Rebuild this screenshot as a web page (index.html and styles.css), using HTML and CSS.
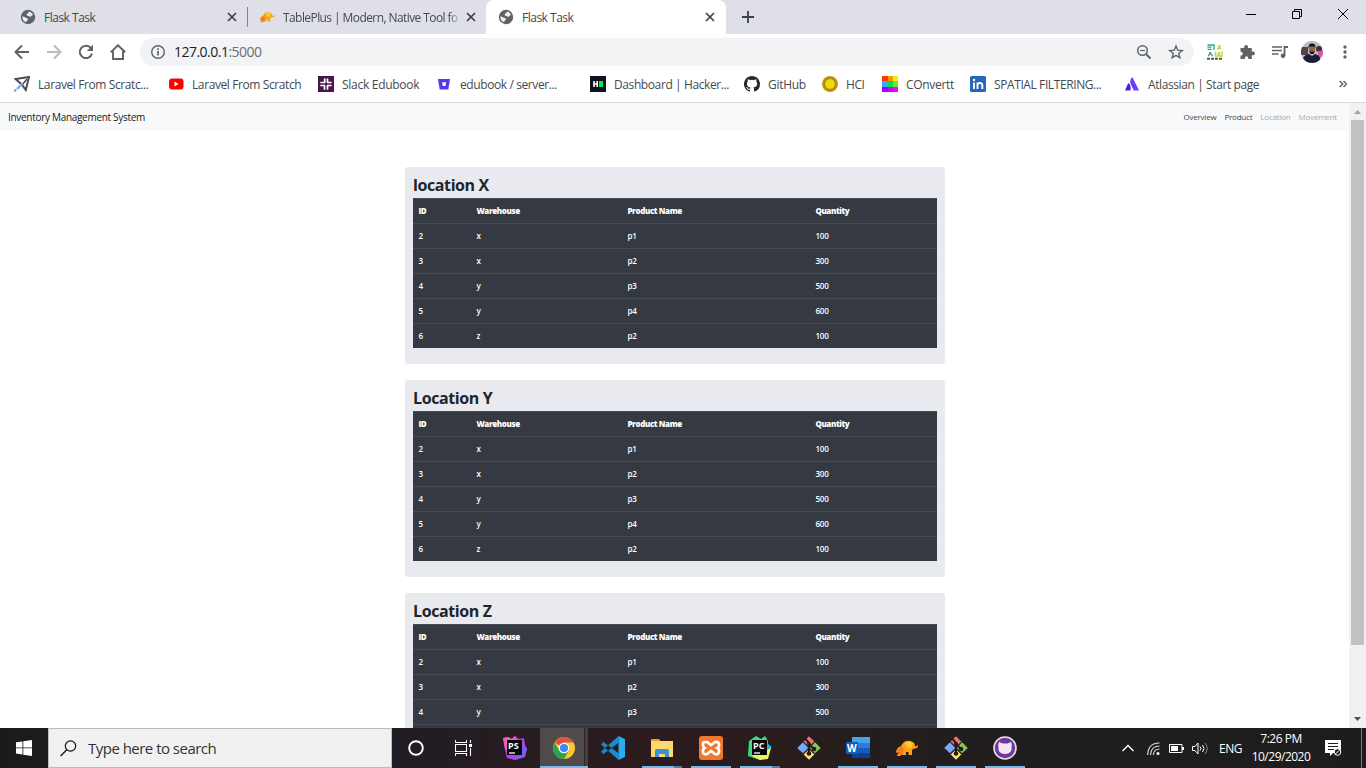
FILE: index.html
```html
<!DOCTYPE html>
<html lang="en">
<head>
<meta charset="utf-8">
<title>Flask Task</title>
<link rel="stylesheet" href="styles.css">
</head>
<body>
<svg class="defs" width="0" height="0">
  <defs>
    <symbol id="globe" viewBox="0 0 16 16"><circle cx="8" cy="8" r="7.200" fill="#5f6368"/><path d="M8.500 2.500Q12 3 13 6q-1.500 0-2 1.500-1.500.5-2.500-.5-1.500 0-2-1.500Q7 4 8.500 4zM2.300 7.500q2 0 3.200 1.200 2.300-.2 2.500 1.500.1 1.200-1.200 1.300-.2 1.500-1.500 1.500-2.800-1.500-3-5.500z" fill="#f0f0f3"/></symbol>
    <symbol id="close" viewBox="0 0 10 10"><path d="M1 1l8 8M9 1L1 9" stroke="#3c4043" stroke-width="1.700"/></symbol>
    <symbol id="elephant" viewBox="0 0 24 18"><path d="M1 14Q1 9 6 7Q9 1 15 2Q20 3 20 7Q22 8 23 5.500Q23.500 10 19 9.500L17 11V16H13.500V13H11V16H7.500L6.500 14L5.500 17H2L3.500 13Z" fill="#faa21b"/><path d="M2 12Q5 8 7 7L9 11L7 16H2.500L4 13Z" fill="#f37a20"/><path d="M10 4Q14 1 18 4L16 9L12 8Z" fill="#ffca28"/></symbol>
    <symbol id="git" viewBox="0 0 24 24"><g stroke="#222" stroke-width=".5"><path d="M12 0l5.500 5.500L12 11 6.500 5.500z" fill="#f07070"/><path d="M6 6l5.500 6L6 17.500 0 12z" fill="#78a8f8"/><path d="M18 6l6 6-6 5.500L12.500 12z" fill="#80cc50"/><path d="M12 13l5.500 5.500L12 24l-5.500-5.500z" fill="#ffe070"/></g><path d="M8.500 3L12 7v11M12 8l5 5" fill="none" stroke="#241c1c" stroke-width="2"/><circle cx="12" cy="8" r="2" fill="#241c1c"/><circle cx="12" cy="17.500" r="2.300" fill="#241c1c"/><circle cx="17" cy="13" r="2.300" fill="#241c1c"/></symbol>
  </defs>
</svg>
<div class="screen">
  <header class="tabstrip">
    <div class="tab tab-a"><svg width="16" height="16"><use href="#globe"/></svg><span class="tab-title">Flask Task</span><svg class="x" width="10" height="10"><use href="#close"/></svg></div>
    <div class="tab tab-b"><svg width="16" height="14"><use href="#elephant"/></svg><span class="tab-title fade">TablePlus | Modern, Native Tool fo</span><svg class="x" width="10" height="10"><use href="#close"/></svg></div>
    <div class="tab tab-active"><svg width="16" height="16"><use href="#globe"/></svg><span class="tab-title">Flask Task</span><svg class="x" width="10" height="10"><use href="#close"/></svg></div>
    <svg class="newtab" width="12" height="12" viewBox="0 0 12 12"><path d="M6 0v12M0 6h12" stroke="#3c4043" stroke-width="1.800"/></svg>
    <div class="winctl">
      <svg width="10" height="12" viewBox="0 0 10 12"><path d="M0 6.500h10" stroke="#000"/></svg>
      <svg width="10" height="12" viewBox="0 0 10 12"><path d="M.5 3.500h7v7h-7zM2.500 3.500v-2h7v7h-2" fill="none" stroke="#000"/></svg>
      <svg width="10" height="12" viewBox="0 0 10 12"><path d="M0 1l10 10M10 1L0 11" stroke="#000"/></svg>
    </div>
  </header>

  <div class="toolbar">
    <svg class="tb" viewBox="0 0 16 16"><path d="M15 8H2M8 1.500L1.500 8 8 14.500" fill="none" stroke="#5f6368" stroke-width="2"/></svg>
    <svg class="tb" viewBox="0 0 16 16"><path d="M1 8h13M8 1.500L14.500 8 8 14.500" fill="none" stroke="#babcbe" stroke-width="2"/></svg>
    <svg class="tb" viewBox="0 0 16 16"><path d="M13 4.200A6.200 6.200 0 1 0 14 9.500" fill="none" stroke="#5f6368" stroke-width="2"/><path d="M15 .8V7H8.800z" fill="#5f6368"/></svg>
    <svg class="tb" viewBox="0 0 16 16"><path d="M3 7v8h10V7M.8 8.300L8 1.200l7.200 7.100" fill="none" stroke="#5f6368" stroke-width="1.900"/></svg>
    <div class="omnibox">
      <svg width="16" height="16" viewBox="0 0 16 16"><circle cx="8" cy="8" r="6.300" fill="none" stroke="#5f6368" stroke-width="1.400"/><path d="M8 7v4.500M8 4.300v1.600" stroke="#5f6368" stroke-width="1.700"/></svg>
      <span class="url">127.0.0.1<span class="port">:5000</span></span>
      <svg class="lens" width="16" height="16" viewBox="0 0 16 16"><circle cx="6.500" cy="6.500" r="4.800" fill="none" stroke="#5f6368" stroke-width="1.500"/><path d="M10 10l4.500 4.500" stroke="#5f6368" stroke-width="2"/><path d="M4 6.500h5" stroke="#5f6368" stroke-width="1.200"/></svg>
      <svg width="16" height="16" viewBox="0 0 16 16"><path d="M8 2l1.700 4.200 4.500.3-3.500 2.900 1.200 4.400L8 11.400l-3.900 2.400 1.200-4.400-3.500-2.900 4.500-.3z" fill="none" stroke="#5f6368" stroke-width="1.400"/></svg>
    </div>
    <div class="exts">
      <svg width="16" height="16" viewBox="0 0 16 16"><path d="M.5 1h6.500v5M.5 3.200h4M.5 5.400h4M1 12q2-1 2-4 1 3 3 4" fill="none" stroke="#1fa890" stroke-width="1.300"/><path d="M10 5q3 0 3-4M11 1.500l3 3.500M8.500 7.500V12H11V8.500M12.500 8v4H15V7.500" fill="none" stroke="#bfd93a" stroke-width="1.400"/><path d="M0 14.700h16" stroke="#6b5140" stroke-width="2" stroke-dasharray="3 1"/></svg>
      <svg width="16" height="16" viewBox="0 0 16 16"><path d="M1.500 4h3.700V3a1.900 1.900 0 0 1 3.800 0v1h3.800v3.600H14a1.800 1.800 0 0 1 0 3.700h-1.200V15H9.300v-1a1.700 1.700 0 0 0-3.400 0v1H1.500v-3.500h.8a1.900 1.900 0 0 0 0-3.700h-.8z" fill="#5f6368"/></svg>
      <svg width="16" height="16" viewBox="0 0 16 16"><path d="M0 3h10M0 6.500h10M0 10h6.500" stroke="#5f6368" stroke-width="1.500"/><path d="M12.500 12V3h3.500" fill="none" stroke="#5f6368" stroke-width="1.800"/><circle cx="11" cy="11.800" r="2.300" fill="#5f6368"/></svg>
      <svg width="22" height="22" viewBox="0 0 22 22"><clipPath id="av"><circle cx="11" cy="11" r="11"/></clipPath><g clip-path="url(#av)"><path fill="#b9bcc9" d="M0 0h22v22H0z"/><path d="M0 6h7v8H0z" fill="#574249"/><circle cx="18" cy="8" r="3" fill="#432d30"/><path d="M17 10h5v6h-5z" fill="#e6509f"/><path d="M1 22q0-8 7-9l3 2 3-2q6 1 6 9z" fill="#1b2036"/><ellipse cx="11" cy="8.500" rx="3.200" ry="4.500" fill="#93644e"/><path d="M7.500 7.500q-.5-5 3.500-5t3.500 5l-1-2h-5zM8.500 10.500h5l-1 2.500h-3z" fill="#171417"/></g></svg>
      <svg width="4" height="14" viewBox="0 0 4 14"><g fill="#5f6368"><circle cx="2" cy="2" r="1.700"/><circle cx="2" cy="7" r="1.700"/><circle cx="2" cy="12" r="1.700"/></g></svg>
    </div>
  </div>

  <nav class="bookmarks">
    <a><svg viewBox="0 0 16 16"><path d="M1.500 3L15 1l-3.200 13-4-5.500z" fill="none" stroke="#494d50" stroke-width="2"/><path d="M13 3L8 9" stroke="#494d50" stroke-width="1.500"/><path d="M8.500 7.500L3 13M0 15.500l2-2" stroke="#76a7f5" stroke-width="2.300"/></svg><span>Laravel From Scratc...</span></a>
    <a><svg viewBox="0 0 16 16"><rect x="1" y="2.500" width="14.500" height="11" rx="3" fill="#f00"/><path d="M6.500 5.600v4.800L10.500 8z" fill="#fff"/></svg><span>Laravel From Scratch</span></a>
    <a><svg viewBox="0 0 16 16"><path fill="#4a154b" d="M0 0h16v16H0z"/><path d="M6.700 3v3.500M3 6.500h3M9.500 3v3M9.700 6.500H13M3 9.500h3.500M6.500 10v3M9.500 9.500V13M10 9.500h3" fill="none" stroke="#fff" stroke-width="1.700" stroke-linecap="round"/></svg><span>Slack Edubook</span></a>
    <a><svg viewBox="0 0 16 16"><path d="M2 3h12l-1.700 10.500H3.700z" fill="#5735ef"/><path d="M6.200 6.200h3.900l-.6 3.700H6.700z" fill="#fff"/></svg><span>edubook / server...</span></a>
    <a><svg viewBox="0 0 16 16"><path fill="#0e141e" d="M0 0h16v16H0z"/><path d="M4 5v6M7.200 5v6M4 8h3" stroke="#fff" stroke-width="1.600"/><path fill="#00ee5a" d="M9 5h4v6H9z"/></svg><span>Dashboard | Hacker...</span></a>
    <a><svg viewBox="0 0 16 16"><path fill="#24292e" d="M8 0C3.580 0 0 3.580 0 8c0 3.540 2.290 6.530 5.470 7.590.4.070.55-.17.55-.38v-1.490c-2.010.37-2.530-.49-2.690-.94-.09-.23-.48-.94-.82-1.130-.28-.15-.68-.52-.01-.53.630-.01 1.080.58 1.230.82.720 1.210 1.870.87 2.330.66.070-.52.280-.87.510-1.070-1.780-.2-3.640-.89-3.640-3.950 0-.87.310-1.590.82-2.150-.08-.2-.36-1.020.08-2.120 0 0 .67-.21 2.200.82a7.400 7.400 0 0 1 4 0c1.530-1.040 2.200-.82 2.200-.82.440 1.100.160 1.920.080 2.120.510.560.820 1.270.820 2.150 0 3.070-1.870 3.750-3.650 3.950.290.250.540.730.540 1.480v2.200c0 .210.150.460.550.380A8 8 0 0 0 16 8c0-4.420-3.580-8-8-8z"/></svg><span>GitHub</span></a>
    <a><svg viewBox="0 0 16 16"><circle cx="8" cy="8" r="8" fill="#c59a12"/><circle cx="8" cy="8" r="5.800" fill="none" stroke="#9f7c20" stroke-width="1.300" stroke-dasharray="1.500 .7"/><circle cx="8" cy="8" r="4.800" fill="#f0d810"/></svg><span>HCI</span></a>
    <a><svg viewBox="0 0 16 16"><path fill="#ff3800" d="M0 0h6v5H0z"/><path fill="#ff9800" d="M6 0h5v5H6z"/><path fill="#f7ed0a" d="M11 0h5v5h-5z"/><path fill="#37a9f5" d="M0 5h6v6H0z"/><path fill="#00df45" d="M6 5h5v6H6z"/><path fill="#62ed22" d="M11 5h5v6h-5z"/><path fill="#9b00ff" d="M0 11h6v5H0z"/><path fill="#d000ff" d="M6 11h5v5H6z"/><path fill="#f600ff" d="M11 11h5v5h-5z"/></svg><span>COnvertt</span></a>
    <a><svg viewBox="0 0 16 16"><rect width="16" height="16" rx="1.500" fill="#2866bc"/><path d="M4 6.500V13M7.500 13V6.500M7.500 9q.2-2 2.400-2T12.300 9v4" fill="none" stroke="#fff" stroke-width="1.900"/><circle cx="4" cy="4" r="1.200" fill="#fff"/></svg><span>SPATIAL FILTERING...</span></a>
    <a><svg viewBox="0 0 16 16"><path d="M5 7.500q-.5-.7-1 .1L1 14.400h5.300Q7.500 10.500 5 7.500z" fill="#4b1ee0"/><path d="M7.700 1.600Q5 5.500 7.300 9.500l2.500 4.900H15L8.700 1.700q-.5-.7-1-.1z" fill="#6a3dff"/></svg><span>Atlassian | Start page</span></a>
    <svg class="more" width="8" height="8" viewBox="0 0 8 8"><path d="M.7 1l3 3-3 3M4.500 1l3 3-3 3" fill="none" stroke="#5f6368" stroke-width="1.500"/></svg>
  </nav>

  <div class="viewport">
    <main class="page">
      <nav class="navbar">
        <span class="brand">Inventory Management System</span>
        <ul class="links"><li>Overview</li><li>Product</li><li class="muted">Location</li><li class="muted">Movement</li></ul>
      </nav>
      <div class="cards">
        <section class="card"><h2>location X</h2>
          <table><thead><tr><th class="c1">ID</th><th class="c2">Warehouse</th><th class="c3">Product Name</th><th>Quantity</th></tr></thead>
          <tbody><tr><td>2</td><td>x</td><td>p1</td><td>100</td></tr><tr><td>3</td><td>x</td><td>p2</td><td>300</td></tr><tr><td>4</td><td>y</td><td>p3</td><td>500</td></tr><tr><td>5</td><td>y</td><td>p4</td><td>600</td></tr><tr><td>6</td><td>z</td><td>p2</td><td>100</td></tr></tbody></table>
        </section>
        <section class="card"><h2>Location Y</h2>
          <table><thead><tr><th class="c1">ID</th><th class="c2">Warehouse</th><th class="c3">Product Name</th><th>Quantity</th></tr></thead>
          <tbody><tr><td>2</td><td>x</td><td>p1</td><td>100</td></tr><tr><td>3</td><td>x</td><td>p2</td><td>300</td></tr><tr><td>4</td><td>y</td><td>p3</td><td>500</td></tr><tr><td>5</td><td>y</td><td>p4</td><td>600</td></tr><tr><td>6</td><td>z</td><td>p2</td><td>100</td></tr></tbody></table>
        </section>
        <section class="card"><h2>Location Z</h2>
          <table><thead><tr><th class="c1">ID</th><th class="c2">Warehouse</th><th class="c3">Product Name</th><th>Quantity</th></tr></thead>
          <tbody><tr><td>2</td><td>x</td><td>p1</td><td>100</td></tr><tr><td>3</td><td>x</td><td>p2</td><td>300</td></tr><tr><td>4</td><td>y</td><td>p3</td><td>500</td></tr><tr><td></td><td></td><td></td><td></td></tr></tbody></table>
        </section>
      </div>
    </main>
    <aside class="scrollbar">
      <svg width="17" height="17" viewBox="0 0 17 17"><path d="M5 11h7L8.500 7z" fill="#a3a3a3"/></svg>
      <div class="thumb"></div>
      <svg class="down" width="17" height="17" viewBox="0 0 17 17"><path d="M5 6h7l-3.500 4z" fill="#505050"/></svg>
    </aside>
  </div>

  <footer class="taskbar">
    <div class="start"><svg width="16" height="16" viewBox="0 0 16 16"><path d="M0 2.300L6.500 1.400v6.100H0zM7.300 1.300L16 0v7.500H7.300zM0 8.300h6.500v6.200L0 13.600zM7.300 8.300H16V16l-8.700-1.300z" fill="#fff"/></svg></div>
    <div class="search"><svg width="17" height="17" viewBox="0 0 17 17"><circle cx="10.500" cy="6" r="5.200" fill="none" stroke="#111" stroke-width="1.200"/><path d="M6.800 9.700L.6 16" stroke="#111" stroke-width="1.300"/></svg><span>Type here to search</span></div>
    <div class="apps">
      <div class="app cortana"><svg width="16" height="16" viewBox="0 0 16 16"><circle cx="8" cy="8" r="6.800" fill="none" stroke="#fff" stroke-width="1.900"/></svg></div>
      <div class="app taskview"><svg width="17" height="16" viewBox="0 0 17 16"><path d="M.5 0v2.500h11V0M.5 16v-2.500h11V16M.5 4.500h11v7H.5zM15.500 0v3M15.500 8v8" fill="none" stroke="#fff" stroke-width="1.100"/><path fill="#fff" d="M14 4h3v3h-3z"/></svg></div>
      <div class="app"><svg width="24" height="24" viewBox="0 0 24 24"><path d="M0 2l5-1 3 2 4-3 4 3 5-1 1 7 2 4-2 8-10 3-8-2-2-8z" fill="#b83ee6"/><path d="M0 2l5-1 4 2 3-3 1 4-9 10-2-1z" fill="#f25ea9"/><path d="M20 7l4 6-3 8-9 3z" fill="#795cf6"/><path fill="#080808" d="M4 4h15v15H4z"/><path d="M6 17h6" stroke="#fff" stroke-width="1.300"/><text x="5" y="12.500" class="ide">PS</text></svg></div>
      <div class="app focused"><svg width="24" height="24" viewBox="0 0 24 24"><circle cx="12" cy="12" r="11" fill="#fbc92e"/><path d="M12 12L2.500 6.500A11 11 0 0 1 21.500 6.500H12z" fill="#df5145"/><path d="M2.500 6.500A11 11 0 0 0 12 23l4.800-8.300L12 12 7.500 15z" fill="#24a35b"/><circle cx="12" cy="12" r="5.300" fill="#fff"/><circle cx="12" cy="12" r="4.100" fill="#4285f4"/></svg></div>
      <div class="app"><svg width="24" height="24" viewBox="0 0 24 24"><path d="M17.500 0L24 3v18l-6.500 3z" fill="#2caaf0"/><path d="M17.500 0L0 15.500l2.500 2.500L18 6.500zM17.500 24L0 8.500 2.500 6 18 17.500z" fill="#168bd2"/></svg></div>
      <div class="app grouped"><svg width="24" height="24" viewBox="0 0 24 24"><path d="M1 3h8l1.500 2H22v16H1z" fill="#e8a20c"/><path d="M1 5h22v16H1z" fill="#ffd86b"/><path d="M5 21v-6q0-2 2-2h10q2 0 2 2v6h-4v-3H9v3z" fill="#3b91d4"/></svg></div>
      <div class="app running"><svg width="24" height="24" viewBox="0 0 24 24"><rect width="24" height="24" rx="3" fill="#f0772b"/><path d="M7 6q-4 0-3 3 0 2 1.500 3-2 1-1.500 4 .5 3 4 2l4-3 4 3q3 1 4-2 .5-3-1.500-4 2-1 1.500-4-1-3-4-2l-4 3-4-3z" fill="none" stroke="#fff" stroke-width="2.700"/></svg></div>
      <div class="app grouped"><svg width="24" height="24" viewBox="0 0 24 24"><path d="M1 5l7-5 5 3 4-3 3 5v14l-8 5-12-4z" fill="#3bdd81"/><path d="M19 8l4 4-3 11-8 1-8-4z" fill="#e9f55b"/><path d="M19 7l5 4-5 3z" fill="#14b7ec"/><path fill="#080808" d="M4 4h15v15H4z"/><path d="M6 17h6" stroke="#fff" stroke-width="1.300"/><text x="5" y="12.500" class="ide">PC</text></svg></div>
      <div class="app"><svg width="24" height="24"><use href="#git"/></svg></div>
      <div class="app running"><svg width="24" height="24" viewBox="0 0 24 24"><path fill="#41a5ee" d="M6 1h18v6H6z"/><path fill="#2b7cd3" d="M6 7h18v5H6z"/><path fill="#185abd" d="M6 12h18v5H6z"/><path fill="#103f91" d="M6 17h18v5H6z"/><path fill="#185abd" d="M0 6h12v12H0z"/><text x="1" y="15.500" class="word">W</text></svg></div>
      <div class="app running"><svg width="24" height="18"><use href="#elephant"/></svg></div>
      <div class="app running"><svg width="24" height="24"><use href="#git"/></svg></div>
      <div class="app running"><svg width="24" height="24" viewBox="0 0 24 24"><circle cx="12" cy="12" r="11" fill="#71379a" stroke="#e8dfec" stroke-width="1.600"/><path d="M6 6l3.500 1.500h5L18 6q1.300 3 .5 5 1 7-6.500 7t-6.500-7Q4.800 9 6 6z" fill="#f1e8f5"/></svg></div>
    </div>
    <div class="tray">
      <svg width="12" height="8" viewBox="0 0 12 8"><path d="M.5 7L6 1.500 11.500 7" fill="none" stroke="#fff" stroke-width="1.300"/></svg>
      <svg class="wifi" width="13" height="13" viewBox="0 0 13 13"><g fill="none" stroke="#ddd" stroke-width="1.100"><path d="M.7 13Q1 1 12.500 1"/><path d="M3.500 13Q4 4 12.500 4"/><path d="M6.300 13Q7 7 12.500 7"/></g><circle cx="11" cy="11.500" r="1.500" fill="#fff"/></svg>
      <svg class="battery" width="15" height="9" viewBox="0 0 15 9"><path d="M.5.5h12.500v8H.5z" fill="none" stroke="#fff"/><path d="M2 2h7v5H2zM13 3h2v3h-2z" fill="#fff"/></svg>
      <svg class="vol" width="16" height="13" viewBox="0 0 16 13"><path d="M.5 4.500H3L6 1v11L3 8.500H.5z" fill="none" stroke="#fff"/><path d="M8 4.500q2 2 0 4M10.500 3q3 3.500 0 7" fill="none" stroke="#fff"/><path d="M13 1q4.500 5.500 0 11" fill="none" stroke="#888"/></svg>
      <span class="lang">ENG</span>
      <div class="clock"><span>7:26 PM</span><span>10/29/2020</span></div>
      <svg class="notif" width="17" height="16" viewBox="0 0 17 16"><path d="M0 0h16v13H8l-3 3v-3H0z" fill="#fff"/><path d="M3 3.500h10M3 6.500h10M3 9.500h6" stroke="#1e1e1e"/><circle cx="12.500" cy="12" r="3.300" fill="#1e1e1e" stroke="#fff"/><path d="M10.500 14l4-4" stroke="#fff"/></svg>
    </div>
    <div class="peek"></div>
  </footer>
</div>
</body>
</html>
```
FILE: styles.css
```css
* { box-sizing: border-box; }
body { margin: 0; overflow: hidden; font-family: "Open Sans", "Noto Sans", sans-serif; }
svg { display: block; flex: none; }
.defs { position: absolute; }
.screen { width: 1366px; height: 768px; display: flex; flex-direction: column; background: #fff; overflow: hidden; }

.tabstrip { height: 34px; flex: none; display: flex; background: #dedfe7; }
.tab { display: flex; align-items: center; height: 34px; font-size: 12px; letter-spacing: -.5px; color: #45494d; white-space: nowrap; }
.tab-title { margin-left: 8px; flex: 1; }
.tab .x { margin-left: 5px; }
.tab-a { width: 248px; padding: 0 11px 0 20px; background: linear-gradient(#80848a, #80848a) right 7px / 1px 20px no-repeat; }
.tab-b { width: 238px; padding: 0 10px 0 11px; letter-spacing: -.58px; }
.fade { -webkit-mask-image: linear-gradient(90deg, #000 166px, transparent 178px); mask-image: linear-gradient(90deg, #000 166px, transparent 178px); }
.tab-active { width: 240px; padding: 0 11px 0 12px; background: #fff; border-radius: 8px 8px 0 0; }
.newtab { margin: 11px 0 0 16px; }
.winctl { margin: 8px 18px 0 auto; display: flex; gap: 36px; }

.toolbar { height: 36px; flex: none; display: flex; align-items: center; padding-left: 14px; }
.tb { width: 16px; height: 16px; margin-right: 16px; }
.omnibox { width: 1054px; height: 28px; margin-left: -2px; padding: 0 10px; display: flex; align-items: center; background: #f1f3f4; border-radius: 14px; }
.url { margin-left: 8px; font-size: 14px; letter-spacing: -.52px; color: #202124; position: relative; top: -1px; }
.port { color: #6b6f73; }
.lens { margin: 0 16px 0 auto; }
.exts { display: flex; align-items: center; margin-left: 13px; gap: 16px; }
.exts svg:nth-child(3) { margin-left: 1px; }
.exts svg:nth-child(4) { margin-left: -3px; }
.exts svg:nth-child(5) { margin-left: 4px; }

.bookmarks { height: 33px; flex: none; padding: 0 19px 4px 14px; display: grid; grid-template-columns: 154px 150px 118px 154px 154px 78px 60px 88px 154px 215px 8px; align-items: center; border-bottom: 1px solid #d9dbde; }
.bookmarks a { display: flex; align-items: center; gap: 8px; font-size: 12px; letter-spacing: -.4px; color: #45494d; white-space: nowrap; }
.bookmarks a svg { width: 16px; height: 16px; }
.bookmarks a:nth-child(3) { letter-spacing: -.28px; }
.bookmarks a:nth-child(6), .bookmarks a:nth-child(8) { letter-spacing: -.3px; }

.viewport { height: 625px; flex: none; display: flex; overflow: hidden; }
.page { width: 1349px; overflow: hidden; }
.navbar { height: 28px; padding: 0 12px 0 8px; display: flex; align-items: center; justify-content: space-between; background: #f8f9fb; }
.brand { font-size: 10px; letter-spacing: -.3px; color: #191919; }
.links { list-style: none; margin: 0 0 2px; padding: 0; display: flex; gap: 8px; font-size: 8px; letter-spacing: -.21px; color: #484848; }
.links .muted { color: #a9abad; }
.cards { width: 540px; margin: 36px 0 0 405px; display: flex; flex-direction: column; gap: 16px; }
.card { height: 197px; padding: 8px; background: #e9eaef; border-radius: 3px; flex: none; }
.card h2 { margin: 0; height: 23px; line-height: 21px; font-size: 16px; font-weight: 700; letter-spacing: -.4px; color: #212529; }
table { width: 524px; table-layout: fixed; border-collapse: separate; border-spacing: 0; background: #353941; color: #fff; font-size: 8px; }
th, td { height: 25px; padding: 0 5.400px; border-top: 1px solid #454a55; text-align: left; line-height: 12px; }
th { font-weight: 800; letter-spacing: -.38px; }
td { font-weight: 600; letter-spacing: -.1px; }
.c1 { width: 58px; } .c2 { width: 151px; } .c3 { width: 188px; }
.scrollbar { width: 17px; display: flex; flex-direction: column; background: #f1f1f1; }
.thumb { width: 13px; height: 525px; margin-left: 2px; background: #c1c1c1; }
.down { margin-top: auto; }

.taskbar { height: 40px; flex: none; display: flex; background: linear-gradient(90deg, #1b1b1d 0, #211d24 29%, #2d1b1d 48%, #261d1d 62%, #1f1f1e 78%, #1d1d1d); color: #fff; }
.start { width: 48px; display: flex; align-items: center; justify-content: center; }
.search { width: 344px; display: flex; align-items: center; padding-left: 11px; gap: 11px; background: #f1f1f1; border: 1px solid #bdbdbd; font-size: 15px; letter-spacing: -.52px; color: #333; }
.apps { display: flex; }
.app { width: 49px; height: 40px; display: flex; align-items: center; justify-content: center; }
.taskview svg { margin-right: 4px; }
.cortana svg { margin-right: 2px; }
.running { background: linear-gradient(#76b9ed, #76b9ed) 5px 38px / 40px 2px no-repeat; }
.grouped { background: linear-gradient(90deg, #76b9ed 32px, #4e7fa6 32px) 5px 38px / 40px 2px no-repeat; }
.focused { background: linear-gradient(#76b9ed, #76b9ed) 1px 38px / 48px 2px no-repeat, linear-gradient(90deg, transparent 1px, #4f4b4b 1px 45px, #2b2525 45px 46px, #454040 46px); }
.ide { font: 700 9px "Open Sans", sans-serif; letter-spacing: 0; fill: #fff; }
.word { font: 700 10px "Open Sans", sans-serif; fill: #fff; }
.tray { margin-left: auto; display: flex; align-items: center; font-size: 12px; letter-spacing: -.5px; }
.wifi { margin-left: 13px; }
.battery { margin-left: 9px; }
.vol { margin-left: 8px; }
.lang { margin-left: 11px; }
.clock { width: 60px; margin-left: 9px; display: flex; flex-direction: column; align-items: center; line-height: 18px; white-space: nowrap; }
.notif { margin: 0 19px 0 14px; }
.peek { width: 5px; border-left: 1px solid #777; }
```
